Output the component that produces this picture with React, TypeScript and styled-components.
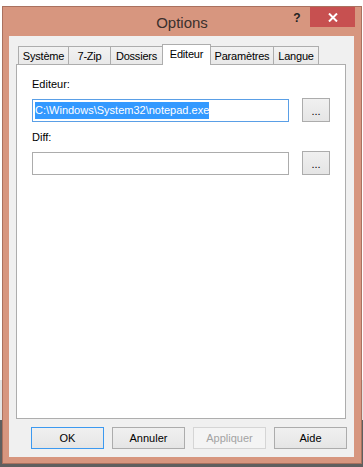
import styled, { createGlobalStyle, css } from "styled-components";

const GlobalStyle = createGlobalStyle`
  html, body {
    margin: 0;
    padding: 0;
    background: #ffffff;
  }
  body {
    font-family: "Liberation Sans", Arial, sans-serif;
    font-size: 11px;
    color: #000;
  }
`;

const Desktop = styled.div`
  width: 363px;
  height: 467px;
  box-sizing: border-box;
  padding: 6px 1px 0 2px;
  overflow: hidden;
  background: linear-gradient(
    to bottom,
    #ffffff 0,
    #ffffff 380px,
    #e4e4e4 380px,
    #e4e4e4 420px,
    #5f5f5f 420px
  );
`;

const Window = styled.div`
  width: 360px;
  height: 458px;
  box-sizing: border-box;
  border: 1px solid #a9715f;
  background: #d7967f;
  display: flex;
  flex-direction: column;
`;

const TitleBar = styled.div`
  height: 29px;
  flex-shrink: 0;
  display: grid;
  grid-template-columns: 1fr auto 1fr;
  align-items: center;
`;

const Title = styled.div`
  grid-column: 2;
  font-size: 15px;
  color: #3a302d;
  padding-top: 1px;
`;

const Controls = styled.div`
  grid-column: 3;
  align-self: start;
  display: flex;
  justify-content: flex-end;
  padding-right: 6px;
`;

const HelpButton = styled.div`
  width: 26px;
  height: 20px;
  display: flex;
  align-items: center;
  justify-content: center;
  font-weight: bold;
  font-size: 12px;
  color: #222;
  padding-top: 2px;
  box-sizing: border-box;
`;

const CloseButton = styled.div`
  width: 45px;
  height: 20px;
  background: #c75050;
  display: flex;
  align-items: center;
  justify-content: center;
`;

const Client = styled.div`
  flex: 1;
  margin: 0 7px 6px 6px;
  background: #f0f0f0;
  box-sizing: border-box;
  padding: 8px 8px 8px 7px;
  display: flex;
  flex-direction: column;
`;

const TabArea = styled.div`
  flex: 1;
  display: flex;
  flex-direction: column;
`;

const TabRow = styled.div`
  height: 20px;
  display: flex;
  align-items: flex-end;
  padding-left: 3px;
  position: relative;
  z-index: 1;
`;

const Tab = styled.div<{ $width: number; $active?: boolean }>`
  width: ${(p) => p.$width}px;
  height: 18px;
  box-sizing: border-box;
  border: 1px solid #adadad;
  border-bottom: none;
  margin-left: -1px;
  background: linear-gradient(#f2f2f2, #e9e9e9);
  display: flex;
  align-items: center;
  justify-content: center;
  font-size: 11px;
  letter-spacing: -0.2px;
  color: #000;

  ${(p) =>
    p.$active &&
    css`
      height: 21px;
      margin-bottom: -1px;
      background: #ffffff;
      padding-bottom: 2px;
      position: relative;
      z-index: 2;
    `}
`;

const Panel = styled.div`
  flex: 1;
  background: #ffffff;
  border: 1px solid #adadad;
  padding: 13px 15px 0 15px;
`;

const FieldLabel = styled.div`
  height: 13px;
  line-height: 13px;
  font-size: 11px;
  margin-bottom: 7px;
`;

const FieldRow = styled.div`
  display: flex;
  align-items: center;
  gap: 13px;
  height: 24px;
  margin-bottom: 9px;
`;

const TextField = styled.div<{ $focused?: boolean }>`
  width: 258px;
  height: 23px;
  box-sizing: border-box;
  border: 1px solid ${(p) => (p.$focused ? "#5a9fe6" : "#acacac")};
  background: #ffffff;
  display: flex;
  align-items: center;
  padding-left: 2px;
`;

const Selection = styled.span`
  background: #3399ff;
  color: #ffffff;
  line-height: 17px;
  font-size: 11px;
  white-space: nowrap;
`;

const BrowseButton = styled.div`
  width: 28px;
  height: 24px;
  box-sizing: border-box;
  border: 1px solid #acacac;
  background: linear-gradient(#f0f0f0, #e5e5e5);
  display: flex;
  align-items: flex-end;
  justify-content: center;
  padding-bottom: 6px;
  font-size: 11px;
  line-height: 8px;
`;

const ButtonRow = styled.div`
  display: flex;
  justify-content: flex-end;
  gap: 8px;
  margin-top: 8px;
  margin-right: -1px;
`;

const DialogButton = styled.div<{ $default?: boolean; $disabled?: boolean }>`
  width: 73px;
  height: 22px;
  box-sizing: border-box;
  border: 1px solid #acacac;
  background: linear-gradient(#f0f0f0, #e5e5e5);
  display: flex;
  align-items: center;
  justify-content: center;
  font-size: 11px;
  color: #000;

  ${(p) =>
    p.$default &&
    css`
      border-color: #3c99f0;
    `}

  ${(p) =>
    p.$disabled &&
    css`
      border-color: #d5d5d5;
      background: #f4f4f4;
      color: #a3a3a3;
    `}
`;

const tabs = [
  { label: "Système", width: 51 },
  { label: "7-Zip", width: 43 },
  { label: "Dossiers", width: 53 },
  { label: "Editeur", width: 49, active: true },
  { label: "Paramètres", width: 64 },
  { label: "Langue", width: 46 },
];

const CloseIcon = () => (
  <svg width="10" height="9" viewBox="0 0 10 9">
    <path
      d="M1 0.5 L9 8.5 M9 0.5 L1 8.5"
      stroke="#ffffff"
      strokeWidth="2"
      fill="none"
    />
  </svg>
);

export default function App() {
  return (
    <>
      <GlobalStyle />
      <Desktop>
        <Window>
          <TitleBar>
            <Title>Options</Title>
            <Controls>
              <HelpButton>?</HelpButton>
              <CloseButton>
                <CloseIcon />
              </CloseButton>
            </Controls>
          </TitleBar>
          <Client>
            <TabArea>
              <TabRow>
                {tabs.map((t) => (
                  <Tab key={t.label} $width={t.width} $active={t.active}>
                    {t.label}
                  </Tab>
                ))}
              </TabRow>
              <Panel>
                <FieldLabel>Editeur:</FieldLabel>
                <FieldRow>
                  <TextField $focused>
                    <Selection>C:\Windows\System32\notepad.exe</Selection>
                  </TextField>
                  <BrowseButton>...</BrowseButton>
                </FieldRow>
                <FieldLabel>Diff:</FieldLabel>
                <FieldRow>
                  <TextField />
                  <BrowseButton>...</BrowseButton>
                </FieldRow>
              </Panel>
            </TabArea>
            <ButtonRow>
              <DialogButton $default>OK</DialogButton>
              <DialogButton>Annuler</DialogButton>
              <DialogButton $disabled>Appliquer</DialogButton>
              <DialogButton>Aide</DialogButton>
            </ButtonRow>
          </Client>
        </Window>
      </Desktop>
    </>
  );
}
